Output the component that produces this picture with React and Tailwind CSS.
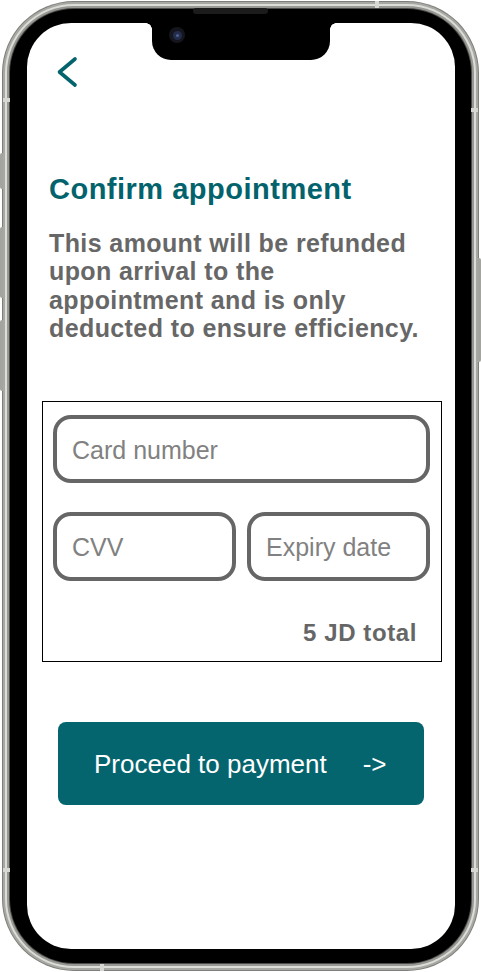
import React from "react";

const font = { fontFamily: '"Liberation Sans", Arial, sans-serif' };

export default function App() {
  return (
    <div className="relative w-[481px] h-[972px] bg-white overflow-hidden" style={font}>
      {/* side buttons */}
      <div className="absolute left-0 top-[153px] w-[3px] h-[36px] rounded-l-[2px] bg-[#a3a49f]" />
      <div className="absolute left-0 top-[227px] w-[3px] h-[71px] rounded-l-[2px] bg-[#a3a49f]" />
      <div className="absolute left-0 top-[320px] w-[3px] h-[71px] rounded-l-[2px] bg-[#a3a49f]" />
      <div className="absolute right-0 top-[258px] w-[3px] h-[104px] rounded-r-[2px] bg-[#a3a49f]" />

      {/* phone frame */}
      <div className="ml-[2px] mt-[1px] w-[477px] h-[970px] rounded-[72px] bg-[#7e7f7a] p-[1px]">
        <div className="w-full h-full rounded-[71px] bg-[#a7a8a3] p-[2px]">
          <div className="w-full h-full rounded-[69px] bg-[#dcdcd8] p-[2px]">
            <div className="w-full h-full rounded-[67px] bg-[#979893] p-[2px]">
              <div className="w-full h-full rounded-[65px] bg-[#4a4a48] p-[1px]">
                <div className="w-full h-full rounded-[64px] bg-black pl-[17px] pr-[16px] pt-[14px] pb-[14px]">
                  {/* screen */}
                  <div className="relative w-full h-full rounded-[44px] bg-white overflow-hidden flex flex-col">
                    {/* notch */}
                    <div className="absolute left-[125px] top-0 w-[178px] h-[37px] bg-black rounded-b-[19px]">
                      <div className="absolute left-[-6px] top-0 w-[6px] h-[6px] bg-[radial-gradient(circle_at_0_100%,transparent_5.5px,black_6px)]" />
                      <div className="absolute right-[-6px] top-0 w-[6px] h-[6px] bg-[radial-gradient(circle_at_100%_100%,transparent_5.5px,black_6px)]" />
                      <div className="absolute left-[17px] top-[4px] w-[16px] h-[16px] rounded-full bg-[#15161d] flex items-center justify-center">
                        <div className="w-[9px] h-[9px] rounded-full bg-[#232c4a] flex items-center justify-center">
                          <div className="w-[3px] h-[3px] rounded-full bg-[#4e5f93]" />
                        </div>
                      </div>
                    </div>

                    {/* back arrow */}
                    <div className="pl-[28px] pt-[32px]">
                      <svg width="24" height="34" viewBox="0 0 24 34" fill="none">
                        <path d="M20 4 L4.5 17 L20 30" stroke="#04646e" strokeWidth="3.6" strokeLinecap="round" strokeLinejoin="round" />
                      </svg>
                    </div>

                    <h1 className="mt-[84px] pl-[22px] text-[29px] leading-[32px] font-bold tracking-[0.5px] text-[#03636d]">
                      Confirm appointment
                    </h1>

                    <p className="mt-[24px] pl-[22px] text-[25px] leading-[28.3px] font-bold tracking-[0.4px] text-[#676767] whitespace-nowrap">
                      This amount will be refunded
                      <br />
                      upon arrival to the
                      <br />
                      appointment and is only
                      <br />
                      deducted to ensure efficiency.
                    </p>

                    {/* card form */}
                    <div className="mt-[59px] ml-[15px] w-[400px] border border-black pt-[13px] pl-[10px] pr-[11px] pb-[14px] flex flex-col">
                      <div className="h-[68px] rounded-[18px] border-4 border-[#666666] flex items-center pl-[15px] pt-[2px]">
                        <span className="text-[25px] leading-[30px] text-[#818181]">Card number</span>
                      </div>
                      <div className="mt-[29px] grid grid-cols-2 gap-[11px]">
                        <div className="h-[69px] rounded-[18px] border-4 border-[#666666] flex items-center pl-[15px]">
                          <span className="text-[25px] leading-[30px] text-[#818181]">CVV</span>
                        </div>
                        <div className="h-[69px] rounded-[18px] border-4 border-[#666666] flex items-center pl-[15px]">
                          <span className="text-[25px] leading-[30px] text-[#818181]">Expiry date</span>
                        </div>
                      </div>
                      <div className="mt-[38px] pr-[13px] text-right text-[24px] leading-[28px] font-bold tracking-[0.6px] text-[#666666]">
                        5 JD total
                      </div>
                    </div>

                    {/* button */}
                    <div className="mt-[60px] ml-[31px] w-[366px] h-[83px] rounded-[8px] bg-[#05656f] flex items-center pl-[36px] text-white text-[26px] leading-[30px]">
                      <span>Proceed to payment</span>
                      <span className="ml-[36px]">-&gt;</span>
                    </div>
                  </div>
                </div>
              </div>
            </div>
          </div>
        </div>
      </div>

      {/* speaker grille */}
      <div className="absolute left-[193px] top-[8px] w-[75px] h-[6px] rounded-full bg-[#1b1b1b]" />

      {/* antenna marks */}
      <div className="absolute left-[3px] top-[98px] w-[7px] h-[4px] bg-[#d6d6d2]" />
      <div className="absolute right-[3px] top-[108px] w-[7px] h-[4px] bg-[#d6d6d2]" />
      <div className="absolute left-[375px] top-[1px] w-[4px] h-[7px] bg-[#d6d6d2]" />
      <div className="absolute left-[100px] top-[964px] w-[4px] h-[7px] bg-[#d6d6d2]" />
      <div className="absolute left-[3px] top-[868px] w-[7px] h-[4px] bg-[#d6d6d2]" />
      <div className="absolute right-[3px] top-[868px] w-[7px] h-[4px] bg-[#d6d6d2]" />
    </div>
  );
}
